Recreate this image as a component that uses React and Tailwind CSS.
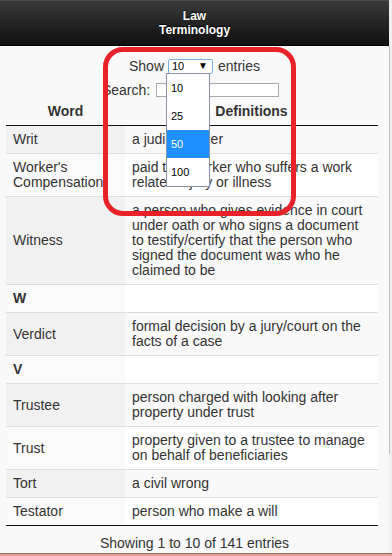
import React from 'react';

const rows = [
  { word: 'Writ', def: 'a judicial order' },
  { word: "Worker's Compensation", def: 'paid to a worker who suffers a work related injury or illness' },
  { word: 'Witness', def: 'a person who gives evidence in court under oath or who signs a document to testify/certify that the person who signed the document was who he claimed to be' },
  { word: 'W', def: '', letter: true },
  { word: 'Verdict', def: 'formal decision by a jury/court on the facts of a case' },
  { word: 'V', def: '', letter: true },
  { word: 'Trustee', def: 'person charged with looking after property under trust' },
  { word: 'Trust', def: 'property given to a trustee to manage on behalf of beneficiaries' },
  { word: 'Tort', def: 'a civil wrong' },
  { word: 'Testator', def: 'person who make a will' },
];

const options = ['10', '25', '50', '100'];

const App = () => {
  return (
    <div className="relative w-[392px] h-[556px] overflow-hidden flex flex-col bg-[#f9f9f9] text-[#333] font-['Liberation_Sans',Arial,sans-serif]">
      <div className="flex flex-1 min-h-0">
        <div className="w-[389px] flex flex-col">
          {/* Header bar */}
          <div className="h-[46px] shrink-0 border-t border-[#4a4a4a] border-b border-b-black bg-gradient-to-b from-[#3a3a3a] to-[#111] flex flex-col items-center pt-[8px] text-white font-bold text-[12px] leading-[14px] [text-shadow:0_-1px_1px_#000]">
            <span>Law</span>
            <span>Terminology</span>
          </div>

          {/* Controls */}
          <div className="mt-[12px] h-[16px] flex items-center justify-center text-[14px] leading-[16px]">
            <span>Show</span>
            <div className="ml-[4px] mr-[5px] w-[45px] h-[15px] bg-white border border-[#7eaee6] rounded-[2px] flex items-center justify-between pl-[3px] pr-[4px] text-[11px] text-black">
              <span>10</span>
              <span className="text-[10px] leading-none">▼</span>
            </div>
            <span>entries</span>
          </div>
          <div className="mt-[8px] h-[16px] flex items-center justify-center text-[14px] leading-[16px] pr-[8px]">
            <span>Search:</span>
            <div className="ml-[6px] w-[123px] h-[14px] bg-white border border-[#a9a9a9]" />
          </div>

          {/* Table */}
          <div className="mx-[6px] w-[372px] text-[14px] leading-[15px]">
            <div className="flex h-[28px] items-center border-b border-[#111] font-bold">
              <div className="w-[119px] text-center">Word</div>
              <div className="flex-1 text-center">Definitions</div>
            </div>
            {rows.map((r, i) => {
              const odd = i % 2 === 0;
              const last = i === rows.length - 1;
              return (
                <div key={i} className={`flex border-b ${last ? 'border-[#111]' : 'border-[#ddd]'}`}>
                  <div className={`w-[119px] shrink-0 px-[7px] py-[6px] flex items-center ${odd ? 'bg-[#f1f1f1]' : 'bg-[#fafafa]'} ${r.letter ? 'font-bold' : ''}`}>
                    {r.word}
                  </div>
                  <div className={`flex-1 px-[7px] py-[6px] ${odd ? 'bg-[#f9f9f9]' : 'bg-white'}`}>
                    {r.def || '\u00a0'}
                  </div>
                </div>
              );
            })}
          </div>

          <div className="mt-[10px] text-center text-[14px] leading-[15px]">
            Showing 1 to 10 of 141 entries
          </div>
        </div>

        {/* Scrollbar strip */}
        <div className="flex-1 bg-[#efefef] flex">
          <div className="mt-[46px] w-[1px] h-[408px] bg-[#bdbdbd]" />
        </div>
      </div>

      <div className="h-[3px] shrink-0 border-t border-[#9d6a60] bg-[#d9a498]" />

      {/* Open select list */}
      <div className="absolute left-[166px] top-[73px] w-[44px] h-[114px] bg-white border border-[#8a93a6] text-[11px] text-black">
        {options.map((o) => (
          <div
            key={o}
            className={`h-[28px] flex items-center pl-[4px] ${o === '50' ? 'bg-[#1e90ff] text-white' : ''}`}
          >
            {o}
          </div>
        ))}
      </div>

      {/* Red annotation */}
      <div className="absolute left-[103px] top-[47px] w-[193px] h-[169px] border-[5px] border-[#e8212b] rounded-[20px] pointer-events-none" />
    </div>
  );
};

export default App;
